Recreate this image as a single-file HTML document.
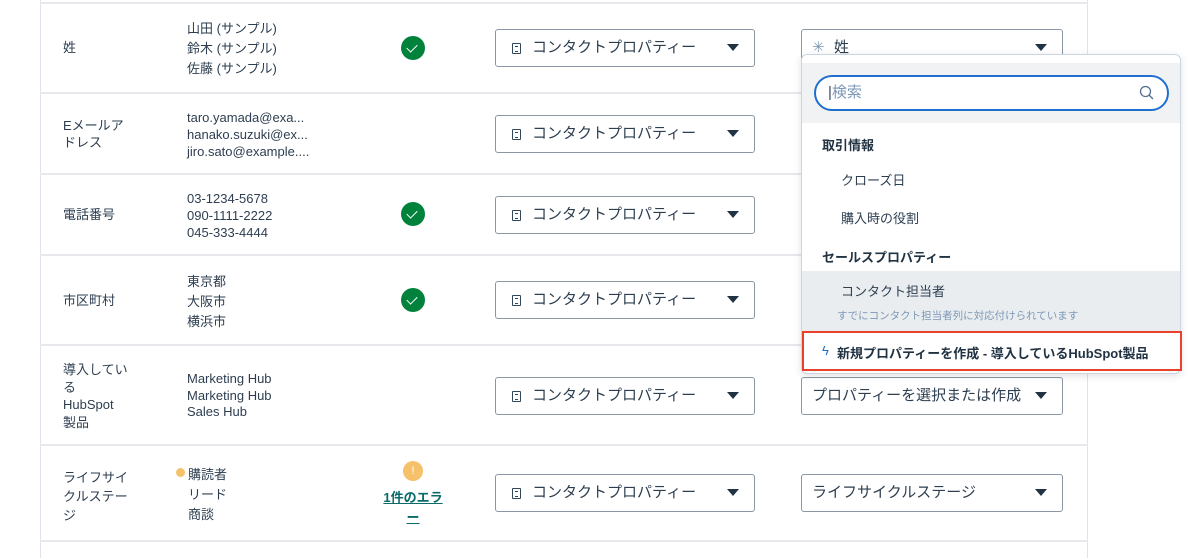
<!DOCTYPE html>
<html><head><meta charset="utf-8"><style>
*{margin:0;padding:0;box-sizing:border-box}
body{width:1200px;height:558px;background:#fff;font-family:"Liberation Sans","Noto Sans CJK JP",sans-serif;color:#2d3e50;position:relative;overflow:hidden;font-size:13px}
.tbl{position:absolute;left:40px;top:0;width:1048px;height:558px;border-left:1px solid #dfe3eb;border-right:1px solid #dfe3eb}
.hl{position:absolute;left:40px;width:1048px;height:2px;background:#e6e8eb}
.t{position:absolute;font-size:13px;line-height:17px;color:#2d3e50}
.chk{position:absolute;width:24px;height:24px;border-radius:50%;background:#00823d}
.chk:after{content:"";position:absolute;left:8px;top:6px;width:5px;height:9px;border:solid #fff;border-width:0 1.5px 1.5px 0;transform:rotate(45deg)}
.dd{position:absolute;height:38px;border:1px solid #8a96a3;border-radius:3px;background:#fff;font-size:15px;line-height:35px;color:#2d3e50}
.dd .ic{position:absolute;left:16px;top:13px;width:9px;height:11px;border:1px solid #33475b;border-radius:1px}
.dd .ic:after{content:"";position:absolute;left:2px;top:2px;width:3px;height:4px;border-top:1px solid #33475b;border-bottom:1px solid #33475b}
.dd .tx{position:absolute;left:36px}
.dd .ar{position:absolute;right:15px;top:14px;width:0;height:0;border-left:6px solid transparent;border-right:6px solid transparent;border-top:7px solid #213343}
.pop{position:absolute;left:801px;top:54px;width:380px;height:320px;background:#fff;border:1px solid #cbd6e2;border-radius:6px;box-shadow:0 2px 8px rgba(0,0,0,.12);overflow:hidden}
</style></head><body>
<div class="tbl"></div>
<div class="hl" style="top:2px"></div>
<div class="hl" style="top:92px"></div>
<div class="hl" style="top:173px"></div>
<div class="hl" style="top:254px"></div>
<div class="hl" style="top:344px"></div>
<div class="hl" style="top:444px"></div>
<div class="hl" style="top:540px"></div>

<div class="t" style="left:63px;top:39px">姓</div>
<div class="t" style="left:187px;top:19px;line-height:20px">山田 (サンプル)<br>鈴木 (サンプル)<br>佐藤 (サンプル)</div>
<div class="chk" style="left:401px;top:36px"></div>
<div class="dd" style="left:495px;top:29px;width:260px"><span class="ic"></span><span class="tx">コンタクトプロパティー</span><span class="ar"></span></div>
<div class="dd" style="left:801px;top:29px;width:262px"><span style="position:absolute;left:10px;color:#7c98b6">✳</span><span class="tx" style="left:32px">姓</span><span class="ar"></span></div>

<div class="t" style="left:63px;top:117px">Eメールア<br>ドレス</div>
<div class="t" style="left:187px;top:109px">taro.yamada@exa...<br>hanako.suzuki@ex...<br>jiro.sato@example....</div>
<div class="dd" style="left:495px;top:115px;width:260px"><span class="ic"></span><span class="tx">コンタクトプロパティー</span><span class="ar"></span></div>

<div class="t" style="left:63px;top:206px">電話番号</div>
<div class="t" style="left:187px;top:190px">03-1234-5678<br>090-1111-2222<br>045-333-4444</div>
<div class="chk" style="left:401px;top:202px"></div>
<div class="dd" style="left:495px;top:196px;width:260px"><span class="ic"></span><span class="tx">コンタクトプロパティー</span><span class="ar"></span></div>

<div class="t" style="left:63px;top:292px">市区町村</div>
<div class="t" style="left:187px;top:272px;line-height:20px">東京都<br>大阪市<br>横浜市</div>
<div class="chk" style="left:401px;top:288px"></div>
<div class="dd" style="left:495px;top:281px;width:260px"><span class="ic"></span><span class="tx">コンタクトプロパティー</span><span class="ar"></span></div>

<div class="t" style="left:63px;top:361px;line-height:17.5px">導入してい<br>る<br>HubSpot<br>製品</div>
<div class="t" style="left:187px;top:371px;line-height:16.5px">Marketing Hub<br>Marketing Hub<br>Sales Hub</div>
<div class="dd" style="left:495px;top:377px;width:260px"><span class="ic"></span><span class="tx">コンタクトプロパティー</span><span class="ar"></span></div>
<div class="dd" style="left:801px;top:377px;width:262px"><span class="tx" style="left:10px">プロパティーを選択または作成</span><span class="ar"></span></div>

<div class="t" style="left:63px;top:468px;line-height:19px">ライフサイ<br>クルステー<br>ジ</div>
<div style="position:absolute;left:176px;top:468px;width:9px;height:9px;border-radius:50%;background:#f5c26b"></div>
<div class="t" style="left:188px;top:465px;line-height:20px">購読者<br>リード<br>商談</div>
<div style="position:absolute;left:403px;top:461px;width:20px;height:20px;border-radius:50%;background:#f5c26b;color:#fff;font-size:11px;text-align:center;line-height:20px">!</div>
<div class="t" style="left:382px;top:488px;color:#0b6b6b;font-weight:bold;line-height:20px;text-align:center;width:62px;text-decoration:underline">1件のエラ<br>ー</div>
<div class="dd" style="left:495px;top:474px;width:260px"><span class="ic"></span><span class="tx">コンタクトプロパティー</span><span class="ar"></span></div>
<div class="dd" style="left:801px;top:474px;width:262px"><span class="tx" style="left:10px">ライフサイクルステージ</span><span class="ar"></span></div>

<div class="pop">
 <div style="position:absolute;left:0;top:8px;width:380px;height:60px;background:#f0f2f4"></div>
 <div style="position:absolute;left:12px;top:20px;width:355px;height:36px;border:2px solid #1f6fcf;border-radius:18px;background:#fff"></div>
 <div style="position:absolute;left:26px;top:28px;font-size:15px;color:#7c98b6;line-height:20px"><span style="color:#33475b">|</span>検索</div>
 <svg style="position:absolute;left:337px;top:30px" width="16" height="16" viewBox="0 0 16 16"><circle cx="6.5" cy="6.5" r="5" fill="none" stroke="#516f90" stroke-width="1.3"/><path d="M10 10l4 4" stroke="#516f90" stroke-width="1.3"/></svg>
 <div style="position:absolute;left:20px;top:80px;font-size:13px;font-weight:bold;color:#213343">取引情報</div>
 <div style="position:absolute;left:39px;top:115px;font-size:13px">クローズ日</div>
 <div style="position:absolute;left:39px;top:153px;font-size:13px">購入時の役割</div>
 <div style="position:absolute;left:20px;top:192px;font-size:13px;font-weight:bold;color:#213343">セールスプロパティー</div>
 <div style="position:absolute;left:0;top:216px;width:380px;height:60px;background:#eaedf0"></div>
 <div style="position:absolute;left:39px;top:226px;font-size:13px">コンタクト担当者</div>
 <div style="position:absolute;left:35px;top:253px;font-size:10.5px;color:#7c98b6">すでにコンタクト担当者列に対応付けられています</div>
</div>
<div style="position:absolute;left:802px;top:331px;width:380px;height:40px;border:2px solid #e8412c;background:#fff"></div>
<div style="position:absolute;left:822px;top:343px;font-size:13px;color:#1f6fcf">ϟ</div>
<div style="position:absolute;left:837px;top:343px;font-size:13px;font-weight:bold;color:#213343">新規プロパティーを作成 - 導入しているHubSpot製品</div>
</body></html>
